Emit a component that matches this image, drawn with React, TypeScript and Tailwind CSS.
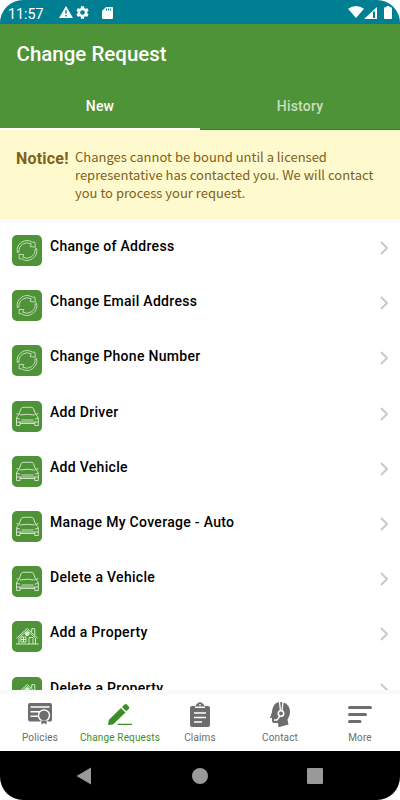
import type { ReactNode } from 'react';

type IconKind = 'refresh' | 'car' | 'house';

interface RequestItem {
  label: string;
  icon: IconKind;
}

const requestItems: RequestItem[] = [
  { label: 'Change of Address', icon: 'refresh' },
  { label: 'Change Email Address', icon: 'refresh' },
  { label: 'Change Phone Number', icon: 'refresh' },
  { label: 'Add Driver', icon: 'car' },
  { label: 'Add Vehicle', icon: 'car' },
  { label: 'Manage My Coverage - Auto', icon: 'car' },
  { label: 'Delete a Vehicle', icon: 'car' },
  { label: 'Add a Property', icon: 'house' },
  { label: 'Delete a Property', icon: 'house' },
];

function RefreshIcon() {
  return (
    <svg viewBox="0 0 30 31" className="w-[30px] h-[31px]" fill="none" stroke="#e4f0dc" strokeWidth="0.75">
      <path d="M5.300 17.500A10 10 0 0 1 20.500 7.200M7 17A8.300 8.300 0 0 1 19.200 8.800M5.300 17.500 7 17" />
      <path d="M20.500 7.200 22.800 7l.6 5.200-5.200-.6 1-2.800" />
      <path d="M24.700 13.500A10 10 0 0 1 9.500 23.800M23 14A8.300 8.300 0 0 1 10.800 22.200M24.700 13.500 23 14" />
      <path d="M9.500 23.800 7.200 24l-.1-4.700 4.700.3-1 2.600" />
    </svg>
  );
}

function CarIcon() {
  return (
    <svg viewBox="0 0 30 31" className="w-[30px] h-[31px]" fill="none" stroke="#e4f0dc" strokeWidth="0.85">
      <path d="M6.800 13.800 9.200 7.500q.4-1 1.500-1.100 4.600-.4 9.200 0 1.100.1 1.500 1.100l2.400 6.300" />
      <path d="M8 14q7.300-1.500 14.600 0M7 13.300l-2.500-.6M23.800 13.300l2.500-.6" />
      <path d="M6.800 13.800q-2.300 1.500-2.300 3.700v3.500h21.800v-3.500q0-2.200-2.500-3.700" />
      <path d="M4.500 17.200l3.500 1M26.300 17.200l-3.500 1M9.500 19h12M4.500 21v3.500H8V21M22.800 21v3.500h3.500V21M8 22.500h14.800" />
    </svg>
  );
}

function HouseIcon() {
  return (
    <svg viewBox="0 0 30 31" className="w-[30px] h-[31px]" fill="none" stroke="#e4f0dc" strokeWidth="0.9">
      <path d="M4.500 17.300 15.200 7.500l10.500 9.800M6.500 17.500l8.700-8 8.500 8" />
      <path d="M19.700 11V7.700h3.100v6.500" />
      <path d="M4 23h22.500M7 17.500V23M23.500 17.500V23M17 23v-6.500h4V23" />
      <path d="M9 16h5v5H9zM11.500 16v5M9 18.500h5" />
      <circle cx="15.200" cy="12.800" r="1.900" fill="#e4f0dc" />
    </svg>
  );
}

function ItemIcon({ kind }: { kind: IconKind }) {
  return (
    <div className="w-[30px] h-[31px] shrink-0 rounded-[5px] bg-[#4f9338]">
      {kind === 'refresh' && <RefreshIcon />}
      {kind === 'car' && <CarIcon />}
      {kind === 'house' && <HouseIcon />}
    </div>
  );
}

function StatusBar() {
  return (
    <div className="h-6 shrink-0 bg-[#007f92] flex items-center text-white">
      <span className="ml-2 pt-[3px] text-[14.3px] leading-[22px] w-[49px]">11:57</span>
      <svg viewBox="0 0 14 12" className="w-3.5 h-3 ml-0.5" fill="currentColor">
        <path fillRule="evenodd" d="M7 0 14 12H0zM6.300 4.300v3.500h1.400V4.300zM6.300 9v1.500h1.400V9z" />
      </svg>
      <svg viewBox="2 2 20 20" className="w-[13px] h-[13px] ml-[3px]" fill="currentColor">
        <path d="M19.140 12.940c.04-.3.06-.61.06-.94 0-.32-.02-.64-.07-.94l2.030-1.580a.49.49 0 0 0 .12-.61l-1.920-3.320a.49.49 0 0 0-.59-.22l-2.390.96a7.030 7.030 0 0 0-1.620-.94l-.36-2.540a.48.48 0 0 0-.48-.41h-3.840a.47.47 0 0 0-.47.41l-.36 2.540c-.59.24-1.130.57-1.620.94l-2.390-.96a.48.48 0 0 0-.59.22L2.740 8.870a.47.47 0 0 0 .12.610l2.030 1.580c-.05.3-.09.63-.09.94s.02.64.07.94l-2.030 1.580a.49.49 0 0 0-.12.610l1.920 3.320c.12.22.37.29.59.22l2.390-.96c.5.38 1.030.7 1.620.94l.36 2.540c.05.24.24.41.48.41h3.840c.24 0 .44-.17.47-.41l.36-2.540c.59-.24 1.130-.56 1.620-.94l2.390.96c.22.08.47 0 .59-.22l1.920-3.320a.47.47 0 0 0-.12-.61zM12 15.600a3.600 3.600 0 1 1 0-7.200 3.600 3.600 0 0 1 0 7.200z" />
      </svg>
      <svg viewBox="0 0 11 12" className="w-[11px] h-3 ml-[13px] mt-px" fill="currentColor">
        <path fillRule="evenodd" d="M4 0h6q1 0 1 1v10q0 1-1 1H1q-1 0-1-1V4zM4 1.500v2h1v-2zM6 1.500v2h1v-2zM8 1.500v2h1v-2z" />
      </svg>
      <div className="ml-auto mr-2 flex items-center">
        <svg viewBox="0 0 16 12" className="w-4 h-3" fill="currentColor">
          <path d="M0 2.800Q8-2.800 16 2.800L8 12z" />
        </svg>
        <svg viewBox="0 0 13 12" className="w-[13px] h-3 mt-px" fill="currentColor">
          <path d="M13 0v12H0z" />
          <path d="M9 4.500h2V11H9z" fill="#007f92" />
        </svg>
        <svg viewBox="0 0 8 13" className="w-2 h-[13px] ml-[7px]" fill="currentColor">
          <path d="M2.500 0h3v1.200H7q1 0 1 1V12q0 1-1 1H1q-1 0-1-1V2.200q0-1 1-1h1.500z" />
        </svg>
      </div>
    </div>
  );
}

function Header() {
  return (
    <div className="h-[106px] shrink-0 bg-[#4f9338] flex flex-col text-white">
      <h1 className="pl-[16.500px] pt-[15px] text-[20.500px] leading-[30px] font-medium">Change Request</h1>
      <div className="mt-auto flex h-12 text-[14px] tracking-[0.2px] font-medium text-center">
        <button className="flex-1 border-b-2 border-white pt-[3px]">New</button>
        <button className="flex-1 border-b border-[#2f8a18] pt-0.5 text-[#c9dfc1]">History</button>
      </div>
    </div>
  );
}

function Notice() {
  return (
    <div className="h-[89px] shrink-0 bg-[#fffacd] flex pl-4 pt-[18px] text-[#806020]">
      <strong className="w-[59px] shrink-0 text-[16px] tracking-[0.2px] leading-[21px] font-bold">Notice!</strong>
      <p className="text-[13px] leading-[18.200px] whitespace-nowrap font-['Noto_Sans_CJK_SC',sans-serif]">
        Changes cannot be bound until a licensed
        <br />
        representative has contacted you. We will contact
        <br />
        you to process your request.
      </p>
    </div>
  );
}

function RequestRow({ label, icon }: RequestItem) {
  return (
    <li className="h-[55.200px] shrink-0 flex items-start pl-3 pr-3 pt-3">
      <ItemIcon kind={icon} />
      <span className="ml-2 mt-px text-[14px] tracking-[0.300px] leading-5 font-medium">{label}</span>
      <svg viewBox="0 0 8 14" className="w-2 h-3.5 ml-auto mt-1.5" fill="none" stroke="#c9c9cb" strokeWidth="2">
        <path d="m1 1 6 6-6 6" />
      </svg>
    </li>
  );
}

interface NavItemProps {
  label: string;
  active?: boolean;
  children: ReactNode;
}

function NavItem({ label, active = false, children }: NavItemProps) {
  return (
    <button className={`w-20 flex flex-col items-center pt-2 ${active ? 'text-[#3b8e25]' : 'text-[#6d6d6d]'}`}>
      <svg viewBox="0 0 26 26" className="w-[26px] h-[26px]" fill="currentColor">
        {children}
      </svg>
      <span className="mt-0.5 text-[10px] tracking-[0.150px] leading-4 whitespace-nowrap">{label}</span>
    </button>
  );
}

function BottomNav() {
  return (
    <nav className="h-[57px] shrink-0 bg-white flex">
      <NavItem label="Policies">
        <path d="M3 1h20q2 0 2 2v15q0 1-1.500 1.500H3q-2 0-2-2V3q0-2 2-2z" />
        <path d="M3.500 5h19M3.500 9.700H13M3.500 14.300H11" stroke="#fff" strokeWidth="1.500" />
        <circle cx="17" cy="13.500" r="5.500" stroke="#fff" strokeWidth="1.400" />
        <path d="M14 18.500V23l3-1.500 3 1.500v-4.500" stroke="#fff" strokeWidth="0.800" />
      </NavItem>
      <NavItem label="Change Requests" active>
        <path d="m1 23 .8-5L14 6l4.500 4.500L6 22.500zM15 5l2.500-2.500q1.200-1 2.300 0l2 2q1.100 1.200 0 2.300l-2.500 2.500zM10 23l1.500-1.200H25V23z" />
      </NavItem>
      <NavItem label="Claims">
        <path d="M5 4h3.500q1-3 4.500-4 3.500 1 4.500 4H21q2 0 2 2v17q0 2-2 2H5q-2 0-2-2V6q0-2 2-2z" />
        <path d="M8 5.200h10M7 11h12M7 15.500h12M7 20h8" stroke="#fff" strokeWidth="1.500" />
        <circle cx="13" cy="2.800" r="0.900" fill="#fff" />
      </NavItem>
      <NavItem label="Contact">
        <path d="M13 0c6 0 10 4 10 9.500 0 4-1.500 6-2.500 8l1 5-10 2.700-.5-4.200H7q-2 0-2-2v-3H3l2-6C5.500 4 8.500 0 13 0z" />
        <path d="M12.500 0l1 9M16 0l-1 9M13 14l-3 4H7" stroke="#fff" strokeWidth="1.300" fill="none" />
        <circle cx="14" cy="11.500" r="2.700" stroke="#fff" strokeWidth="1.600" />
      </NavItem>
      <NavItem label="More">
        <path d="M2.500 5.500h21M2.500 12.500h16M2.500 19.500H13" stroke="currentColor" strokeWidth="3" strokeLinecap="round" />
      </NavItem>
    </nav>
  );
}

function SystemNav() {
  return (
    <div className="h-[49px] shrink-0 bg-black flex items-center text-[#999]">
      <svg viewBox="0 0 16 18" className="w-4 h-[18px] ml-[76px]" fill="currentColor">
        <path d="M15 .5v17L.5 9z" />
      </svg>
      <div className="w-4 h-4 ml-[100px] rounded-full bg-[#999]" />
      <div className="w-4 h-4 ml-[99px] rounded-[1px] bg-[#999]" />
    </div>
  );
}

export default function App() {
  return (
    <div className="w-[400px] h-[800px] bg-white">
      <div className="h-full flex flex-col overflow-hidden rounded-[23px] bg-[#fafafa] font-['Roboto',sans-serif]">
        <StatusBar />
        <Header />
        <Notice />
        <ul className="mt-1 h-[467px] shrink-0 overflow-hidden bg-white flex flex-col text-black">
          {requestItems.map(item => (
            <RequestRow key={item.label} {...item} />
          ))}
        </ul>
        <div className="h-1 shrink-0" />
        <BottomNav />
        <SystemNav />
      </div>
    </div>
  );
}
